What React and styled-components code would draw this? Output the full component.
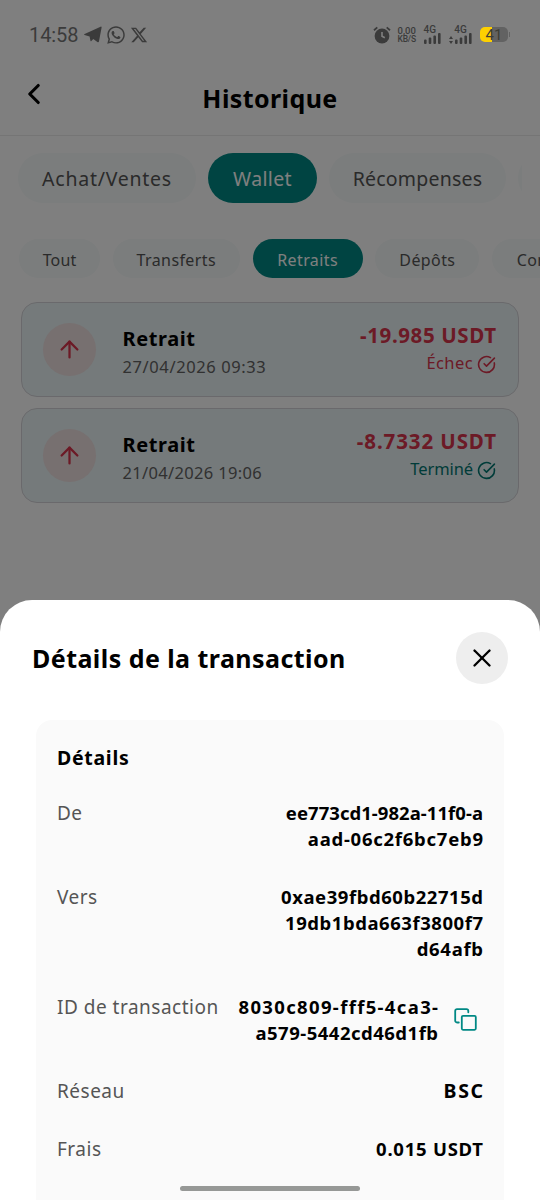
import styled, { createGlobalStyle } from 'styled-components'
import { ArrowUp, ChevronLeft, CircleCheckBig, X } from 'lucide-react'
import { FaWhatsapp } from 'react-icons/fa'
import { FaXTwitter } from 'react-icons/fa6'

const categories = [
    { label: 'Achat/Ventes', width: 178, spacing: 0.75 },
    { label: 'Wallet', width: 109, spacing: 0.35, active: true },
    { label: 'Récompenses', width: 177, spacing: 0.2 },
    { label: '', width: 150, spacing: 0 },
]

const filters = [
    { label: 'Tout', width: 81, spacing: 0.1 },
    { label: 'Transferts', width: 127, spacing: 0.4 },
    { label: 'Retraits', width: 110, spacing: 0.4, active: true },
    { label: 'Dépôts', width: 104, spacing: 0.4 },
    { label: 'Conversions', width: 146, spacing: 0.4 },
]

const transactions = [
    { id: 1, date: '27/04/2026 09:33', dateSpacing: 0.6, amount: '-19.985 USDT', spacing: 0.6, status: 'Échec', failed: true },
    { id: 2, date: '21/04/2026 19:06', dateSpacing: 0.33, amount: '-8.7332 USDT', spacing: 0.9, status: 'Terminé' },
]

const details = [
    {
        label: 'De',
        lines: [
            { text: 'ee773cd1-982a-11f0-a', spacing: 0.05 },
            { text: 'aad-06c2f6bc7eb9', spacing: 0.75 },
        ],
    },
    {
        label: 'Vers',
        lines: [
            { text: '0xae39fbd60b22715d', spacing: 0.55 },
            { text: '19db1bda663f3800f7', spacing: 0.55 },
            { text: 'd64afb', spacing: 0.7 },
        ],
    },
    {
        label: 'ID de transaction',
        lines: [
            { text: '8030c809-fff5-4ca3-', spacing: 1.35 },
            { text: 'a579-5442cd46d1fb', spacing: 0.5 },
        ],
        copy: true,
    },
    { label: 'Réseau', lines: [{ text: 'BSC', spacing: 1.6, size: 19.5 }] },
    { label: 'Frais', lines: [{ text: '0.015 USDT', spacing: 0.75 }] },
    { label: 'Date', lines: [{ text: '27/04/2026', spacing: 0.75 }] },
]

const TelegramIcon = () => (
    <svg width="18" height="17" viewBox="0 0 18 17" fill="currentColor">
        <path d="M.6 8 16.6.7c.7-.3 1.2.1 1 .9L15 15.3c-.2 1-.8 1.2-1.6.7L9.3 13l-2 1.900c-.4.4-.8.3-.9-.3L5.600 10.500.6 9C-.1 8.800-.1 8.300.6 8z" />
    </svg>
)

const AlarmIcon = () => (
    <svg width="18" height="18" viewBox="0 0 18 18" fill="none">
        <circle cx="9" cy="10" r="7.4" fill="currentColor" />
        <path d="M1 4.2 4.3 1.4M17 4.2 13.7 1.4" stroke="currentColor" strokeWidth="1.8" />
        <path d="M9 6v4.2l2.8 1.6" stroke="#808080" strokeWidth="1.6" />
    </svg>
)

const SignalIcon = () => (
    <svg width="17" height="11" viewBox="0 0 17 11" fill="currentColor">
        <rect x="0" y="6.5" width="2.6" height="4.5" rx="1" />
        <rect x="4.7" y="4.5" width="2.6" height="6.5" rx="1" />
        <rect x="9.4" y="2.5" width="2.6" height="8.5" rx="1" />
        <rect x="14" y="0" width="2.6" height="11" rx="1" />
    </svg>
)

const DataArrows = () => (
    <svg width="4" height="8" viewBox="0 0 4 8" fill="currentColor">
        <path d="M2 0 4 3H0zM2 8 0 5h4z" />
    </svg>
)

const CopyIcon = () => (
    <svg width="23" height="23" viewBox="0 0 23 23" fill="none" stroke="currentColor" strokeWidth="1.8" strokeLinecap="round">
        <rect x="7.8" y="7.8" width="14" height="14" rx="1.2" />
        <path d="M4.8 14.500H3a1.800 1.800 0 0 1-1.800-1.800V3A1.800 1.800 0 0 1 3 1.200h9.500A1.800 1.800 0 0 1 14.300 3v1.300" />
    </svg>
)

const App = () => {
    return (
        <Screen>
            <GlobalStyle />
            <StatusBar>
                <Clock>14:58</Clock>
                <AppIcons>
                    <TelegramIcon />
                    <FaWhatsapp size={20} />
                    <FaXTwitter size={18} />
                </AppIcons>
                <SystemIcons>
                    <AlarmIcon />
                    <NetSpeed>
                        <Speed>0,00</Speed>
                        <span>KB/S</span>
                    </NetSpeed>
                    <Signal>
                        <span>4G</span>
                        <SignalIcon />
                    </Signal>
                    <Signal $second>
                        <span>4G</span>
                        <Bars><DataArrows /><SignalIcon /></Bars>
                    </Signal>
                    <Battery>
                        <BatteryBody>41</BatteryBody>
                        <BatteryTip />
                    </Battery>
                </SystemIcons>
            </StatusBar>
            <Header>
                <BackButton>
                    <ChevronLeft size={34} strokeWidth={2.2} />
                </BackButton>
                <Title>Historique</Title>
            </Header>
            <Tabs>
                {categories.map((tab, i) => (
                    <Tab key={i} $width={tab.width} $spacing={tab.spacing} $active={tab.active}>{tab.label}</Tab>
                ))}
            </Tabs>
            <Tabs $small>
                {filters.map(tab => (
                    <Tab key={tab.label} $small $width={tab.width} $spacing={tab.spacing} $active={tab.active}>{tab.label}</Tab>
                ))}
            </Tabs>
            <List>
                {transactions.map(tx => (
                    <Transaction key={tx.id}>
                        <Direction>
                            <ArrowUp size={27} strokeWidth={2} />
                        </Direction>
                        <Info>
                            <Name>Retrait</Name>
                            <DateText $spacing={tx.dateSpacing}>{tx.date}</DateText>
                        </Info>
                        <Result>
                            <Amount $spacing={tx.spacing}>{tx.amount}</Amount>
                            <Status $failed={tx.failed}>
                                {tx.status}
                                <CircleCheckBig size={19} strokeWidth={2} />
                            </Status>
                        </Result>
                    </Transaction>
                ))}
            </List>
            <Backdrop />
            <Sheet>
                <SheetHeader>
                    <SheetTitle>Détails de la transaction</SheetTitle>
                    <CloseButton>
                        <X size={30} strokeWidth={1.9} />
                    </CloseButton>
                </SheetHeader>
                <Panel>
                    <PanelTitle>Détails</PanelTitle>
                    {details.map(row => (
                        <Row key={row.label}>
                            <Label>{row.label}</Label>
                            <Value>
                                {row.lines.map(line => (
                                    <Line key={line.text} $spacing={line.spacing} $size={line.size}>{line.text}</Line>
                                ))}
                            </Value>
                            {row.copy && <CopyButton><CopyIcon /></CopyButton>}
                        </Row>
                    ))}
                </Panel>
            </Sheet>
            <HomeBar />
        </Screen>
    )
}

export default App

const GlobalStyle = createGlobalStyle`
    * {
        box-sizing: border-box;
    }
    body {
        margin: 0;
        background: #808080;
    }
    button {
        border: none;
        padding: 0;
        background: none;
        font: inherit;
        color: inherit;
    }
`
const Screen = styled.div`
    position: relative;
    width: 540px;
    height: 1200px;
    overflow: hidden;
    background: #fff;
    color: #000;
    font-family: 'Noto Sans', sans-serif;
`
const StatusBar = styled.div`
    position: relative;
    z-index: 2;
    display: flex;
    align-items: center;
    height: 69px;
    padding: 0 30px 0 29px;
    color: #3b3b3b;
    font-family: Roboto, sans-serif;
`
const Clock = styled.span`
    width: 55px;
    font-size: 20px;
    letter-spacing: -0.1px;
`
const AppIcons = styled.div`
    display: flex;
    align-items: center;
    gap: 4px;
`
const SystemIcons = styled.div`
    display: flex;
    align-items: center;
    margin-left: auto;
`
const NetSpeed = styled.div`
    display: flex;
    flex-direction: column;
    margin-left: 7px;
    width: 19px;
    font-size: 8.5px;
    font-weight: 500;
    line-height: 9px;
    letter-spacing: -0.2px;
`
const Speed = styled.span`
    font-size: 9.5px;
    letter-spacing: 0;
`
const Signal = styled.div`
    display: flex;
    flex-direction: column;
    align-items: ${props => props.$second ? 'center' : 'flex-start'};
    margin-left: ${props => props.$second ? '8.5px' : '7px'};
    font-size: 10px;
    font-weight: 500;
    line-height: 7px;
`
const Bars = styled.div`
    display: flex;
    align-items: flex-end;
    gap: 2px;
`
const Battery = styled.div`
    display: flex;
    align-items: center;
    gap: 1px;
    margin-left: 8px;
`
const BatteryBody = styled.div`
    width: 28px;
    height: 15px;
    border-radius: 5px;
    background: linear-gradient(to right, #fdd000 0 12px, #626262 12px);
    color: #3d3d35;
    font-size: 15px;
    font-weight: 400;
    line-height: 16px;
    text-align: center;
`
const BatteryTip = styled.div`
    width: 1px;
    height: 5px;
    background: #626262;
`
const Header = styled.div`
    display: grid;
    grid-template-columns: 68px 1fr 68px;
    align-items: center;
    height: 67px;
    border-bottom: 1px solid #ebebeb;
`
const BackButton = styled.button`
    display: flex;
    margin: -16px 0 0 17px;
`
const Title = styled.h1`
    margin: -9px 0 0;
    text-align: center;
    font-size: 25px;
    font-weight: 700;
    line-height: 32px;
    letter-spacing: 0.4px;
`
const Tabs = styled.div`
    display: flex;
    gap: ${props => props.$small ? '12.8px' : '12px'};
    margin: ${props => props.$small ? '36px 0 0 19px' : '17px 18.5px 0 18px'};
    overflow: hidden;
`
const Tab = styled.button`
    flex: none;
    width: ${props => props.$width}px;
    height: ${props => props.$small ? '39px' : '50px'};
    padding-top: 2px;
    border-radius: 25px;
    background: ${props => props.$active ? '#008884' : '#f6fafa'};
    color: ${props => props.$active ? '#fff' : '#555'};
    font-size: ${props => props.$small ? '16px' : '19.5px'};
    letter-spacing: ${props => props.$spacing}px;
    white-space: nowrap;
    line-height: 1;
`
const List = styled.div`
    display: flex;
    flex-direction: column;
    gap: 11px;
    margin: 24px 21px 0;
`
const Transaction = styled.div`
    display: flex;
    align-items: center;
    height: 95px;
    padding: 0 22px 0 21px;
    border: 1px solid #d4d3d8;
    border-radius: 16px;
    background: #ebf4f6;
`
const Direction = styled.div`
    display: grid;
    place-items: center;
    width: 53px;
    height: 53px;
    border-radius: 50%;
    background: #eee0e0;
    color: #d8344c;
`
const Info = styled.div`
    display: flex;
    flex-direction: column;
    margin: 6px 0 0 26.5px;
`
const Name = styled.span`
    font-size: 20px;
    font-weight: 700;
    line-height: 28px;
    letter-spacing: 0.6px;
`
const DateText = styled.span`
    color: #626262;
    font-size: 16.5px;
    line-height: 28px;
    letter-spacing: ${props => props.$spacing}px;
`
const Result = styled.div`
    display: flex;
    flex-direction: column;
    align-items: flex-end;
    margin: -1px 0 0 auto;
`
const Amount = styled.span`
    margin-right: -${props => props.$spacing}px;
    color: #d8344c;
    font-size: 20.5px;
    font-weight: 700;
    line-height: 27px;
    letter-spacing: ${props => props.$spacing}px;
`
const Status = styled.span`
    display: flex;
    align-items: center;
    gap: 4px;
    color: ${props => props.$failed ? '#d8344c' : '#007872'};
    font-size: 16.5px;
    line-height: 27px;
    letter-spacing: ${props => props.$failed ? '0.4px' : '-0.1px'};

    svg {
        margin-top: 3px;
    }
`
const Backdrop = styled.div`
    position: absolute;
    inset: 0;
    background: rgba(0, 0, 0, 0.5);
`
const Sheet = styled.div`
    position: absolute;
    inset: 600px 0 0;
    overflow: hidden;
    border-radius: 32px 32px 0 0;
    background: #fff;
`
const SheetHeader = styled.div`
    display: flex;
    align-items: center;
    justify-content: space-between;
    height: 116px;
    padding: 0 32px;
`
const SheetTitle = styled.h2`
    margin: 0;
    font-size: 25px;
    font-weight: 700;
    letter-spacing: 0.45px;
    white-space: nowrap;
`
const CloseButton = styled.button`
    display: grid;
    place-items: center;
    width: 52px;
    height: 52px;
    border-radius: 50%;
    background: #eee;
`
const Panel = styled.div`
    margin: 4px 36px 0;
    padding: 25px 21px;
    border-radius: 16px;
    background: #fafafa;
`
const PanelTitle = styled.h3`
    margin: 0 0 29px;
    font-size: 19.5px;
    font-weight: 700;
    line-height: 26px;
    letter-spacing: 0.7px;
`
const Row = styled.div`
    display: flex;
    justify-content: space-between;
    margin-bottom: 32px;
    line-height: 26px;
`
const Label = styled.span`
    color: #555;
    font-size: 19px;
    letter-spacing: 0.5px;
    white-space: nowrap;
`
const Value = styled.span`
    display: flex;
    flex-direction: column;
    align-items: flex-end;
    margin-left: auto;
    font-weight: 700;
    white-space: nowrap;
`
const Line = styled.span`
    margin-right: -${props => props.$spacing}px;
    font-size: ${props => props.$size || 18.5}px;
    letter-spacing: ${props => props.$spacing}px;
`
const CopyButton = styled.button`
    display: grid;
    align-self: center;
    margin: -2px 6px 0 16px;
    color: #008884;
`
const HomeBar = styled.div`
    position: absolute;
    left: 180px;
    bottom: 9px;
    width: 180px;
    height: 5px;
    border-radius: 3px;
    background: #969896;
`
